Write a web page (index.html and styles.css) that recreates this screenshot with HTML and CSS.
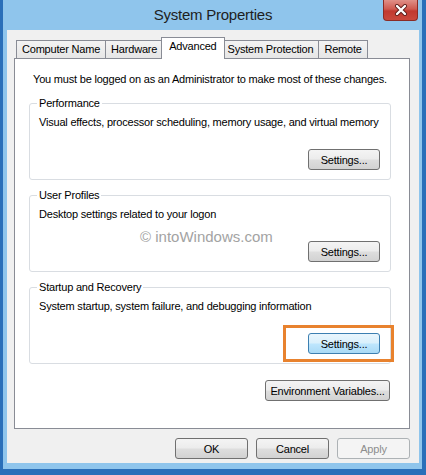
FILE: index.html
```html
<!DOCTYPE html>
<html lang="en">
<head>
    <meta charset="utf-8">
    <title>System Properties</title>
    <link rel="stylesheet" href="styles.css">
</head>
<body>
<div class="window">
    <div class="titlebar">
        <span class="title">System Properties</span>
        <button class="close" aria-label="Close">
            <svg width="14" height="12" viewBox="0 0 14 12">
                <path d="M3 2 L11 10 M11 2 L3 10" stroke="#5a1a16" stroke-width="4" stroke-linecap="round"/>
                <path d="M3 2 L11 10 M11 2 L3 10" stroke="#ffffff" stroke-width="2.4" stroke-linecap="round"/>
            </svg>
        </button>
    </div>

    <div class="client">
        <div class="tabs">
            <div class="tab">Computer Name</div>
            <div class="tab">Hardware</div>
            <div class="tab active">Advanced</div>
            <div class="tab">System Protection</div>
            <div class="tab">Remote</div>
        </div>

        <div class="panel">
            <p class="note">You must be logged on as an Administrator to make most of these changes.</p>

            <fieldset class="group">
                <legend>Performance</legend>
                <p class="desc">Visual effects, processor scheduling, memory usage, and virtual memory</p>
                <div class="actions">
                    <button class="btn">Settings...</button>
                </div>
            </fieldset>

            <fieldset class="group">
                <legend>User Profiles</legend>
                <p class="desc">Desktop settings related to your logon</p>
                <div class="actions">
                    <button class="btn">Settings...</button>
                </div>
            </fieldset>

            <fieldset class="group">
                <legend>Startup and Recovery</legend>
                <p class="desc">System startup, system failure, and debugging information</p>
                <div class="actions">
                    <span class="marked">
                        <button class="btn hot">Settings...</button>
                        <span class="highlight"></span>
                    </span>
                </div>
            </fieldset>

            <div class="env">
                <button class="btn wide">Environment Variables...</button>
            </div>
        </div>

        <div class="footer">
            <button class="btn">OK</button>
            <button class="btn">Cancel</button>
            <button class="btn" disabled>Apply</button>
        </div>
    </div>

    <div class="watermark">© intoWindows.com</div>
</div>
</body>
</html>
```

FILE: styles.css
```css
html, body {
    margin: 0;
    height: 475px;
    overflow: hidden;
}

body {
    background: #2a6fb9;
    font-family: "Liberation Sans", Arial, sans-serif;
    font-size: 11px;
    letter-spacing: -0.2px;
    color: #000000;
}

.window {
    position: relative;
    box-sizing: border-box;
    width: 419px;
    height: 469px;
    margin-left: 3px;
    padding: 0 3px 6px 4px;
    background: #8fc5ec;
}

.titlebar {
    position: relative;
    height: 30px;
    display: flex;
    align-items: center;
    justify-content: center;
}

.title {
    font-size: 15px;
    letter-spacing: -0.25px;
    color: #1e1e1e;
    margin-top: -1px;
}

.close {
    position: absolute;
    top: 0;
    right: 1px;
    width: 35px;
    height: 21px;
    padding: 0;
    border: 1px solid #8a2b25;
    border-top: none;
    border-radius: 0 0 4px 4px;
    background: linear-gradient(#e09088 0%, #cf5a50 45%, #c1392f 55%, #c9483c 100%);
    display: flex;
    align-items: center;
    justify-content: center;
}

.client {
    box-sizing: border-box;
    height: 433px;
    padding: 7px 9px 0 7px;
    background: #f0f0f0;
}

.tabs {
    display: flex;
    align-items: flex-end;
    height: 21px;
    padding-left: 2px;
}

.tab {
    box-sizing: border-box;
    height: 18px;
    padding: 0 5px;
    line-height: 17px;
    border: 1px solid #898c95;
    border-bottom: none;
    background: linear-gradient(#f3f3f3, #e6e6e6);
    margin-left: -1px;
}

.tab:first-child {
    margin-left: 0;
}

.tab.active {
    position: relative;
    z-index: 1;
    height: 22px;
    line-height: 17px;
    padding: 0 7px;
    margin: 0 -2px -1px -2px;
    background: #ffffff;
}

.panel {
    box-sizing: border-box;
    height: 371px;
    padding: 13px 18px 0 14px;
    background: #ffffff;
    border: 1px solid #898c95;
}

.note {
    margin: 0 0 9px 4px;
    line-height: 15px;
}

.group {
    margin: 0 0 8px 0;
    padding: 4px 10px 9px 9px;
    border: 1px solid #d9dde2;
    border-radius: 3px;
}

.group legend {
    padding: 0 2px;
    margin-left: -2px;
    line-height: 15px;
}

.desc {
    margin: 0 0 19px 0;
    line-height: 15px;
}

.actions {
    display: flex;
    justify-content: flex-end;
}

.marked {
    position: relative;
    display: flex;
}

.highlight {
    position: absolute;
    top: -8px;
    left: -25px;
    right: -14px;
    bottom: -8px;
    border: 3px solid #e8822e;
}

.btn {
    box-sizing: border-box;
    width: 72px;
    height: 21px;
    padding: 0;
    font: inherit;
    letter-spacing: inherit;
    color: #000000;
    border: 1px solid #707070;
    border-radius: 3px;
    background: linear-gradient(#f4f4f4 0%, #ececec 48%, #dedede 52%, #d2d2d2 100%);
}

.btn.hot {
    border-color: #3c7fb1;
    background: linear-gradient(#eaf6fd 0%, #d9f0fc 48%, #bee6fd 52%, #a9daf6 100%);
}

.btn.wide {
    width: 125px;
}

.btn:disabled {
    color: #8d8d8d;
    border-color: #adb2b5;
    background: #f4f4f4;
}

.env {
    display: flex;
    justify-content: flex-end;
    margin: 16px 1px 0 0;
}

.footer {
    display: flex;
    justify-content: flex-end;
    gap: 8px;
    margin-top: 9px;
}

.footer .btn {
    width: 73px;
}

.watermark {
    position: absolute;
    left: 137px;
    top: 228px;
    font-size: 15px;
    letter-spacing: 0;
    color: #a3a3a3;
}
```
